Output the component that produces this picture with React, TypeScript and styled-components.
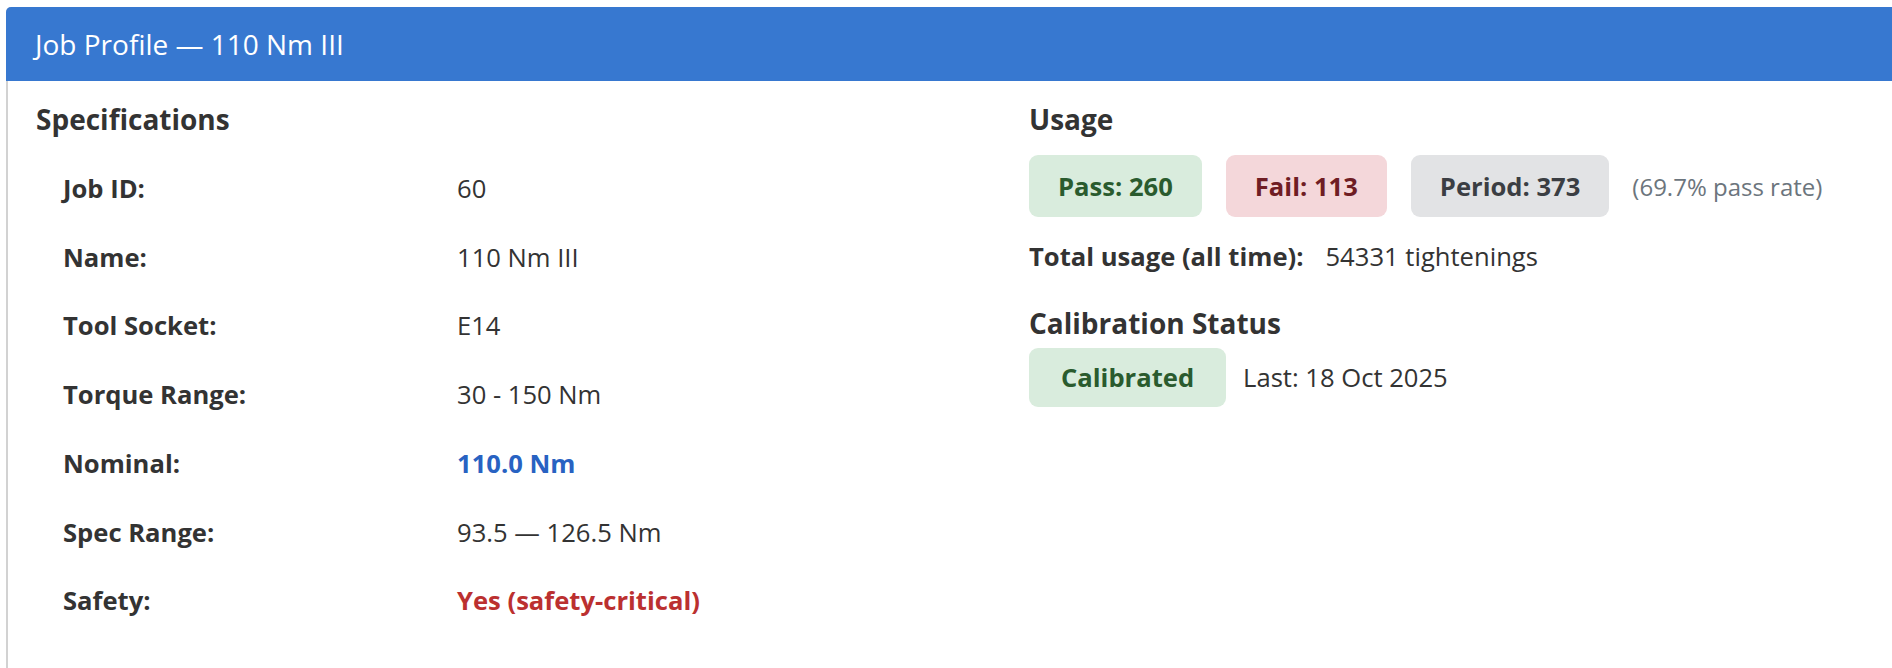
import styled, { createGlobalStyle } from "styled-components";

const GlobalStyle = createGlobalStyle`
  html, body {
    margin: 0;
    padding: 0;
    background: #fff;
    overflow: hidden;
  }
  body {
    font-family: "Open Sans", "Liberation Sans", sans-serif;
    color: #333;
  }
`;

const Card = styled.div`
  margin: 7px 0 0 6px;
  width: 2040px;
  border: 2px solid #d2d2d2;
  border-top: none;
  border-radius: 5px 5px 0 0;
  min-height: 700px;
`;

const CardHeader = styled.div`
  margin: 0 -2px;
  height: 74px;
  display: flex;
  align-items: center;
  padding: 0 29px;
  background: #3778d0;
  color: #fff;
  font-size: 28px;
  border-radius: 5px 5px 0 0;
`;

const CardBody = styled.div`
  display: grid;
  grid-template-columns: 961px 1fr;
  column-gap: 32px;
  padding: 21px 28px 0 28px;
`;

const Column = styled.div`
  display: flex;
  flex-direction: column;
`;

const SectionTitle = styled.h3<{ $gap?: number }>`
  margin: ${(p) => p.$gap ?? 0}px 0 0 0;
  font-size: 28px;
  font-weight: 700;
  line-height: 34px;
  color: #333;
`;

const SpecTable = styled.div`
  margin-top: 19px;
  display: flex;
  flex-direction: column;
`;

const SpecRow = styled.div`
  display: grid;
  grid-template-columns: 394px 1fr;
  font-size: 25.6px;
  line-height: 36.7px;
`;

const SpecLabel = styled.div`
  padding: 16px 0 16px 27px;
  font-weight: 700;
`;

const SpecValue = styled.div<{ $tone?: "blue" | "red" }>`
  padding: 16px 0 16px 27px;
  font-weight: ${(p) => (p.$tone ? 700 : 400)};
  color: ${(p) =>
    p.$tone === "blue" ? "#2862c2" : p.$tone === "red" ? "#bb3030" : "#333"};
`;

const BadgeRow = styled.div<{ $top: number }>`
  margin-top: ${(p) => p.$top}px;
  display: flex;
  align-items: center;
  gap: 24px;
  font-size: 25.6px;
`;

const tones = {
  pass: { bg: "#d9ecdd", fg: "#2a5b2e" },
  fail: { bg: "#f4d7da", fg: "#6f1d24" },
  neutral: { bg: "#e2e3e5", fg: "#3b3e43" },
};

const Badge = styled.span<{
  $tone: keyof typeof tones;
  $h?: number;
  $pad?: number;
}>`
  display: inline-flex;
  align-items: center;
  height: ${(p) => p.$h ?? 62}px;
  padding: 0 ${(p) => p.$pad ?? 29}px;
  border-radius: 9px;
  font-size: 25.6px;
  font-weight: 700;
  background: ${(p) => tones[p.$tone].bg};
  color: ${(p) => tones[p.$tone].fg};
`;

const Muted = styled.span`
  color: #6c757d;
  font-size: 24px;
  margin-left: -1px;
`;

const InfoLine = styled.div`
  margin-top: 22px;
  font-size: 25.6px;
  line-height: 36px;

  strong {
    font-weight: 700;
    margin-right: 22px;
  }
`;

const LastDate = styled.span`
  margin-left: -7px;
`;

const specs: { label: string; value: string; tone?: "blue" | "red" }[] = [
  { label: "Job ID:", value: "60" },
  { label: "Name:", value: "110 Nm III" },
  { label: "Tool Socket:", value: "E14" },
  { label: "Torque Range:", value: "30 - 150 Nm" },
  { label: "Nominal:", value: "110.0 Nm", tone: "blue" },
  { label: "Spec Range:", value: "93.5 — 126.5 Nm" },
  { label: "Safety:", value: "Yes (safety-critical)", tone: "red" },
];

export default function App() {
  return (
    <>
      <GlobalStyle />
      <Card>
        <CardHeader>Job Profile — 110 Nm III</CardHeader>
        <CardBody>
          <Column>
            <SectionTitle>Specifications</SectionTitle>
            <SpecTable>
              {specs.map((s) => (
                <SpecRow key={s.label}>
                  <SpecLabel>{s.label}</SpecLabel>
                  <SpecValue $tone={s.tone}>{s.value}</SpecValue>
                </SpecRow>
              ))}
            </SpecTable>
          </Column>
          <Column>
            <SectionTitle>Usage</SectionTitle>
            <BadgeRow $top={19}>
              <Badge $tone="pass">Pass: 260</Badge>
              <Badge $tone="fail">Fail: 113</Badge>
              <Badge $tone="neutral">Period: 373</Badge>
              <Muted>(69.7% pass rate)</Muted>
            </BadgeRow>
            <InfoLine>
              <strong>Total usage (all time):</strong>
              54331 tightenings
            </InfoLine>
            <SectionTitle $gap={31}>Calibration Status</SectionTitle>
            <BadgeRow $top={8}>
              <Badge $tone="pass" $h={59} $pad={32}>
                Calibrated
              </Badge>
              <LastDate>Last: 18 Oct 2025</LastDate>
            </BadgeRow>
          </Column>
        </CardBody>
      </Card>
    </>
  );
}
